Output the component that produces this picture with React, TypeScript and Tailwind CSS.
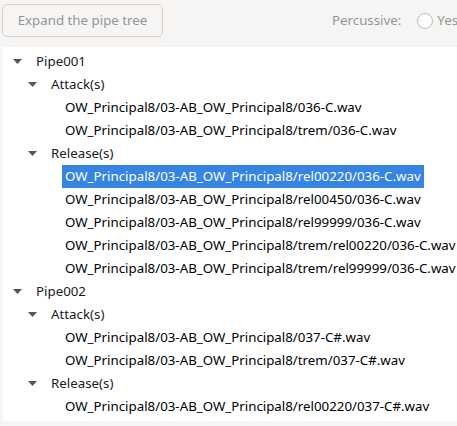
import React from "react"

type Node = { label: string; children?: Node[]; selected?: boolean }

const tree: Node[] = [
  {
    label: "Pipe001",
    children: [
      {
        label: "Attack(s)",
        children: [
          { label: "OW_Principal8/03-AB_OW_Principal8/036-C.wav" },
          { label: "OW_Principal8/03-AB_OW_Principal8/trem/036-C.wav" },
        ],
      },
      {
        label: "Release(s)",
        children: [
          { label: "OW_Principal8/03-AB_OW_Principal8/rel00220/036-C.wav", selected: true },
          { label: "OW_Principal8/03-AB_OW_Principal8/rel00450/036-C.wav" },
          { label: "OW_Principal8/03-AB_OW_Principal8/rel99999/036-C.wav" },
          { label: "OW_Principal8/03-AB_OW_Principal8/trem/rel00220/036-C.wav" },
          { label: "OW_Principal8/03-AB_OW_Principal8/trem/rel99999/036-C.wav" },
        ],
      },
    ],
  },
  {
    label: "Pipe002",
    children: [
      {
        label: "Attack(s)",
        children: [
          { label: "OW_Principal8/03-AB_OW_Principal8/037-C#.wav" },
          { label: "OW_Principal8/03-AB_OW_Principal8/trem/037-C#.wav" },
        ],
      },
      {
        label: "Release(s)",
        children: [{ label: "OW_Principal8/03-AB_OW_Principal8/rel00220/037-C#.wav" }],
      },
    ],
  },
]

function Expander() {
  return (
    <svg width="9" height="5" viewBox="0 0 9 5" className="shrink-0">
      <path d="M0 0 H9 L4.5 5 Z" fill="#555753" />
    </svg>
  )
}

function Row({ node, depth }: { node: Node; depth: number }) {
  const indent = depth === 0 ? "pl-[10px]" : depth === 1 ? "pl-[25px]" : "pl-[59px]"
  return (
    <>
      <div className={`flex h-[23px] items-center ${indent}`}>
        {node.children ? (
          <>
            <Expander />
            <span className="ml-[14px] text-[#1a1a1a]">{node.label}</span>
          </>
        ) : (
          <span
            className={
              node.selected
                ? "flex h-[23px] items-center bg-[#3584e4] px-[3px] text-white"
                : "px-[3px] text-black"
            }
          >
            {node.label}
          </span>
        )}
      </div>
      {node.children?.map((c, i) => (
        <Row key={i} node={c} depth={depth + 1} />
      ))}
    </>
  )
}

export default function App() {
  return (
    <div
      className="h-[426px] w-[457px] overflow-hidden bg-[#f6f5f4] text-[13.3px]"
      style={{ fontFamily: '"Noto Sans", "Open Sans", sans-serif' }}
    >
      <div className="flex h-[47px] items-start pl-[2px] pt-[4px]">
        <button className="h-[33px] w-[161px] shrink-0 rounded-[5px] border border-[#d6d1cd] bg-[#f6f5f4] text-[#929595]">
          Expand the pipe tree
        </button>
        <div className="ml-[169px] flex h-[33px] items-center whitespace-nowrap text-[#929595]">
          <span>Percussive:</span>
          <span className="ml-[16px] h-[16px] w-[16px] shrink-0 rounded-full border border-[#c0bdb9] bg-white" />
          <span className="ml-[4px]">Yes</span>
        </div>
      </div>
      <div className="ml-[3px] h-[374px] bg-white py-[3px] whitespace-nowrap">
        {tree.map((n, i) => (
          <Row key={i} node={n} depth={0} />
        ))}
      </div>
    </div>
  )
}
